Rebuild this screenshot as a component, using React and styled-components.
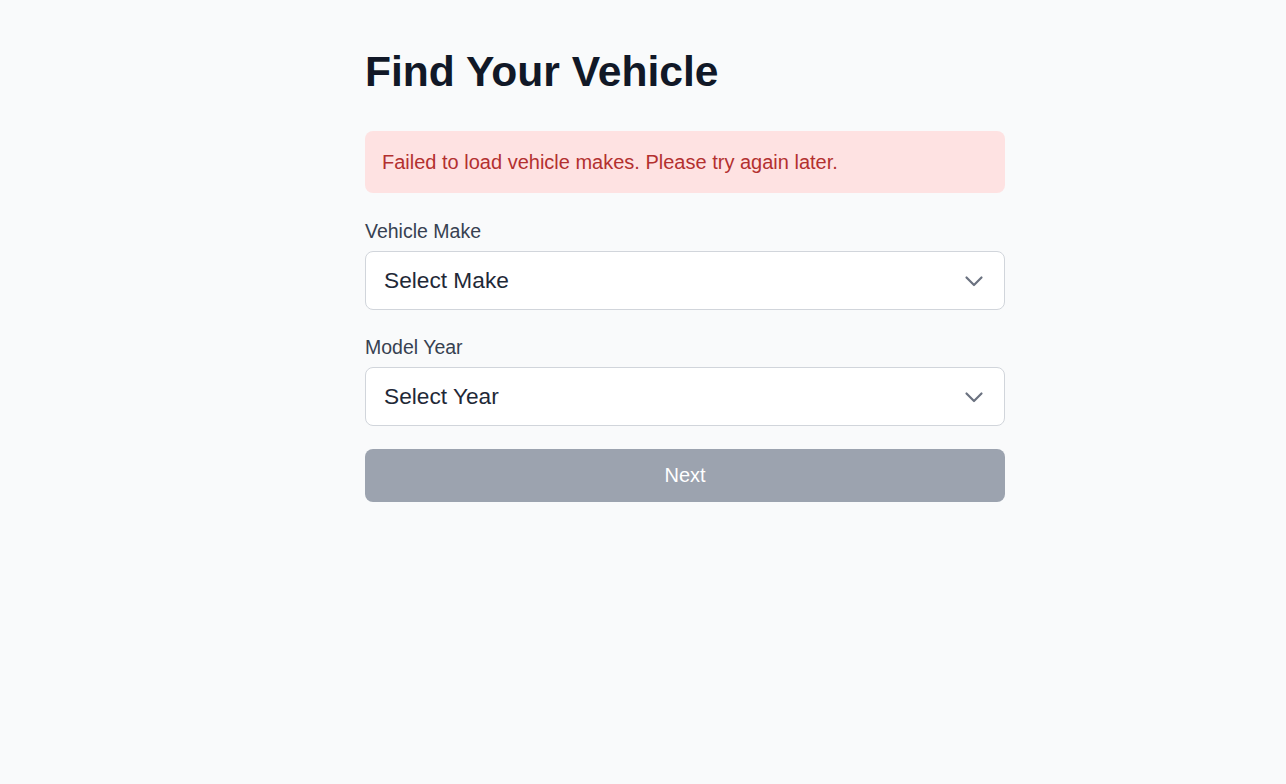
import styled, { createGlobalStyle } from "styled-components";

const GlobalStyle = createGlobalStyle`
  html, body {
    margin: 0;
    padding: 0;
    background: #f9fafb;
    font-family: "Liberation Sans", Arial, sans-serif;
  }
`;

const Page = styled.div`
  min-height: 784px;
  display: flex;
  justify-content: center;
  padding-left: 84px;
  box-sizing: border-box;
`;

const Container = styled.div`
  width: 640px;
  padding-top: 45px;
  display: flex;
  flex-direction: column;
`;

const Title = styled.h1`
  margin: 0 0 34px;
  font-size: 42.6px;
  line-height: 52px;
  font-weight: 700;
  color: #111827;
`;

const ErrorBox = styled.div`
  background: #fee2e2;
  color: #b3302f;
  border-radius: 8px;
  padding: 0 17px;
  height: 62px;
  display: flex;
  align-items: center;
  font-size: 20px;
  margin-bottom: 26px;
`;

const Field = styled.div`
  display: flex;
  flex-direction: column;
  margin-bottom: 25px;
`;

const Label = styled.label`
  font-size: 19.5px;
  line-height: 24px;
  color: #374151;
  margin-bottom: 8px;
`;

const SelectBox = styled.div`
  height: 59px;
  box-sizing: border-box;
  background: #fff;
  border: 1px solid #d1d5db;
  border-radius: 8px;
  display: flex;
  align-items: center;
  justify-content: space-between;
  padding: 0 18px 0 18px;
  font-size: 22.7px;
  color: #1f2937;
`;

const Chevron = () => (
  <svg width="24" height="24" viewBox="0 0 24 24" fill="none" stroke="#6b7280" strokeWidth="2.2" strokeLinecap="round" strokeLinejoin="round">
    <path d="M4.5 8.5l7.5 7.5 7.5-7.5" />
  </svg>
);

const Button = styled.button`
  height: 53px;
  border: none;
  border-radius: 8px;
  background: #9ca3af;
  color: #fff;
  font-family: inherit;
  font-size: 20px;
  margin-top: -2px;
  cursor: not-allowed;
`;

const fields = [
  { label: "Vehicle Make", placeholder: "Select Make" },
  { label: "Model Year", placeholder: "Select Year" },
];

export default function App() {
  return (
    <>
      <GlobalStyle />
      <Page>
        <Container>
          <Title>Find Your Vehicle</Title>
          <ErrorBox>Failed to load vehicle makes. Please try again later.</ErrorBox>
          {fields.map((f) => (
            <Field key={f.label}>
              <Label>{f.label}</Label>
              <SelectBox>
                <span>{f.placeholder}</span>
                <Chevron />
              </SelectBox>
            </Field>
          ))}
          <Button disabled>Next</Button>
        </Container>
      </Page>
    </>
  );
}
